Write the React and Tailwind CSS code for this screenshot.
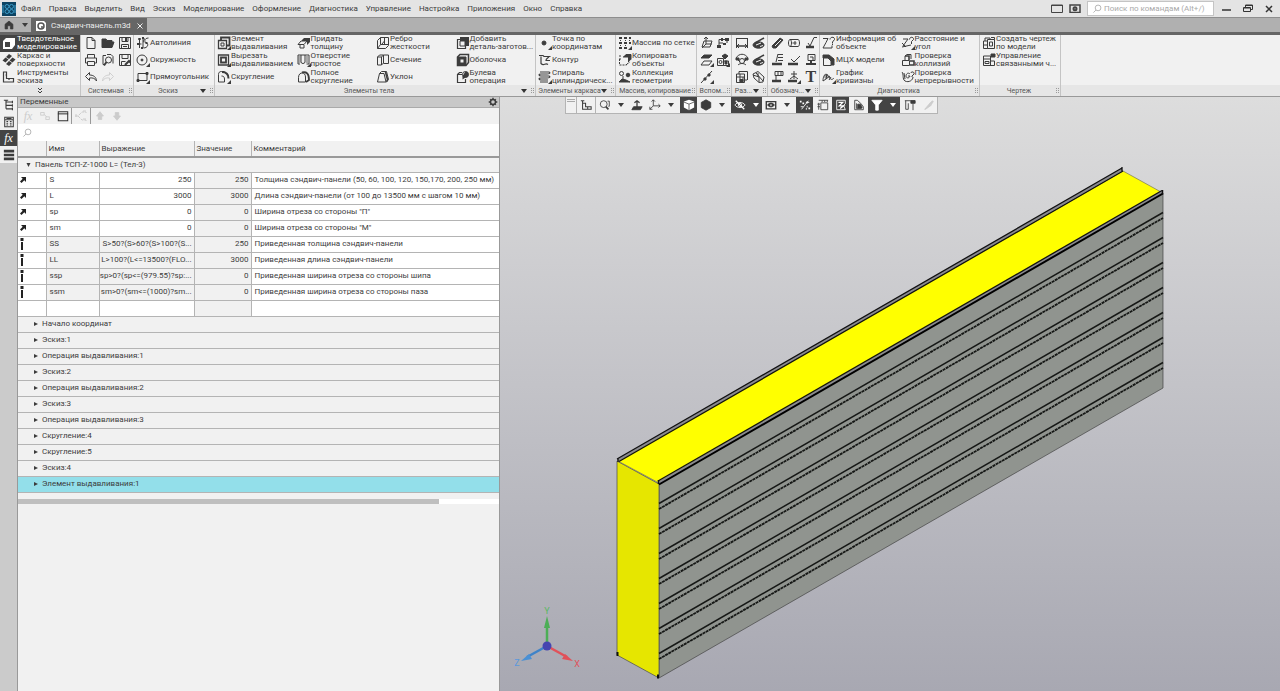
import React, { useState } from "react";

const icons = {
  solid: (
    <>
      <path d="M1 5l3-3h9v7l-3 4H1z" fill="currentColor" stroke="none" />
      <rect x="3" y="6" width="5" height="5" fill="#444" stroke="none" />
    </>
  ),
  surface: (
    <g fill="currentColor" stroke="none">
      <path d="M7 1l3 2-3 3-3-2zM3.500 4.500l3 2-3 3-3-2zM10.500 4.500l3 2-3 3-3-2zM7 8l3 2-3 3-3-2z" />
    </g>
  ),
  sketchTools: <path d="M1.500 2h3v6.500h7V12h-10zM4.500 5h-1M7 8.500v1.500" strokeWidth="1.200" />,
  newFile: <path d="M3 1.500h5l3 3v8H3zM8 1.500v3h3" />,
  open: <path d="M1 3h4l1 1.500h5V6h2l-2 5.500H1z" fill="currentColor" />,
  save: (
    <>
      <path d="M1.500 1.500h11v11h-11zM4 1.500v4h6v-4M3.500 12.500v-4h7v4M5 10.500h4" />
      <path d="M8 2v3" strokeWidth="2" />
    </>
  ),
  print: <path d="M3.500 5V1.500h7V5M3.500 10h-2V5h11v5h-2M3.500 8.500h7v4h-7z" />,
  preview: (
    <>
      <path d="M4 11.500H2v-9h3M6 1.500h4l2 2v7" />
      <circle cx="7.500" cy="7" r="3" />
      <path d="M5.500 9L3 12.500" strokeWidth="2" />
    </>
  ),
  saveAs: (
    <>
      <path d="M1.500 1.500h11v11h-11zM4 1.500v4h6v-4M3.500 12.500v-4h4" />
      <path d="M7 12l4-4 1.500 1.500" strokeWidth="2" />
    </>
  ),
  undo: <path d="M5.500 2.500L1.500 6.500l4 4V8c3.500-.5 5.500.5 7 3-.2-4-3-6-7-6z" />,
  redo: <path d="M8.500 2.500l4 4-4 4V8c-3.500-.5-5.500.5-7 3 .2-4 3-6 7-6z" />,
  autoline: (
    <>
      <path d="M2 3h3M3.500 3v9M1.500 8h4M7 2v10M12.500 2c-5 0-4 5-2 5s2 5-3 5M9 2.500c-1.500 1-2 3-1 4" />
      <path d="M2.500 2h2v2h-2zM1 7h2v2H1zM5 11h2v2H5zM9.500 6h2v2h-2zM6 1h2v2H6z" fill="currentColor" stroke="none" />
    </>
  ),
  circle: (
    <>
      <circle cx="6" cy="7" r="5" />
      <circle cx="6" cy="7" r="1" fill="currentColor" />
    </>
  ),
  rectangle: (
    <>
      <path d="M2 3.500h9v7H2z" />
      <path d="M1 9.500h2v2H1zM10 2.500h2v2h-2z" fill="currentColor" />
    </>
  ),
  extrude: (
    <>
      <path d="M4 4V1.500h8.500v8H10" strokeWidth="1.800" />
      <path d="M1.500 4.500h8v8h-8z" strokeWidth="1.300" />
      <path d="M4 7h3v3H4z" />
    </>
  ),
  cut: (
    <>
      <path d="M1.500 2h10v10h-10z" strokeWidth="1.300" />
      <path d="M4 4.500h5v5H4z" strokeWidth="1.800" />
    </>
  ),
  fillet: (
    <>
      <path d="M1.500 12V4.500c0-2 1-3 3-3h3" />
      <path d="M5 2c4.500 0 6.500 2 6.500 6.500" strokeWidth="2" />
      <path d="M1.500 12h6V9c0-2-1-3-3-3" />
    </>
  ),
  thicken: (
    <>
      <path d="M1 8.500L4 5h6L7 8.500zM3 9v3h4V9" />
      <path d="M5 4l2-2h6v4l-3 3V5H5z" fill="currentColor" stroke="none" />
    </>
  ),
  hole: (
    <>
      <path d="M1 2h11v9H9.500M1 2v9h2M4 2v7c0 2 4 2 4 0V2" />
      <path d="M2.500 3v7M10 3v7" strokeWidth="2" opacity=".4" />
    </>
  ),
  fullFillet: (
    <>
      <path d="M1.500 12V7.500c0-6 7-6 7-.500v5z" />
      <path d="M5 2.500c4.500-1 7 1 7 7.500l-3 2" strokeWidth="1.800" />
    </>
  ),
  rib: <path d="M1.500 4.500l3-3h8v8l-3 3h-8zM4.500 1.500v7h8M4.500 8.500l-3 4M8.500 2v6M6 8l2.500-3" />,
  section: <path d="M1.500 4l2-2h4v8l-2 2h-4zM7.500 2h5v8.500h-5M5.500 4H1.500M5.500 4v8M5.500 4l2-2" />,
  draft: (
    <>
      <path d="M1.500 12l2-8.500 2-2h5l2 8-2 2.500zM3.500 3.500H8l2 8.500" />
      <path d="M9.500 2l2 7.500-.8 2" strokeWidth="1.600" />
    </>
  ),
  addPart: (
    <>
      <path d="M4 3.500H1.500v9h8V10" strokeWidth="1.200" />
      <path d="M4 1h9v9H9V5H4z" fill="currentColor" stroke="none" />
      <path d="M4 5h5v5H4z" />
    </>
  ),
  shell: (
    <>
      <path d="M1.500 4L4 1.500h8.500v8L10 12.500H1.500z" strokeWidth="1.500" />
      <path d="M2 4h8v8H2z" fill="currentColor" />
      <path d="M4.500 6.500h3v3h-3z" fill="#f1f1f1" stroke="none" />
    </>
  ),
  boolean: (
    <>
      <path d="M6 4.500H1.500v8h8V9M1.500 4.500l2-2H6" strokeWidth="1.200" />
      <circle cx="9.500" cy="4.500" r="3" fill="#f1f1f1" />
      <path d="M9.500 1.500a3 3 0 010 6l-3 2V6z" fill="currentColor" stroke="none" />
    </>
  ),
  point: <circle cx="6" cy="7" r="2" fill="currentColor" />,
  contour: <path d="M1 2.500h4l1 1h6.500M3 3.500v7c3 3 4-1 7 1M11 3.500c-1 2-3 2-3 4h4" strokeWidth="1.200" />,
  spiral: (
    <path d="M2 2h9c2 1 0 2-2 2H3C0 4 1 6 3 6h8c2 1 0 2-2 2H3c-3 0-2 2 0 2h7M2 12h8" strokeWidth="1.200" />
  ),
  gridArray: (
    <g stroke="none" fill="currentColor">
      <path d="M1 1h3v2H1zM6 1h3v2H6zM11 1h2v2h-2zM1 6h3v2H1zM6 6h3v2H6zM11 6h2v2h-2zM1 11h3v2H1zM6 11h3v2H6z" />
      <path d="M2 4h1v1H2zM7 4h1v1H7zM11 4h1v1h-1zM2 9h1v1H2zM7 9h1v1H7z" />
    </g>
  ),
  copyObj: (
    <>
      <path d="M5 4l2.500-2.500H13v5L10.500 9V4z" fill="currentColor" stroke="none" />
      <path d="M5 4h5.500v5M8 1.500h5v5" />
      <path d="M1 6h3M1.500 6v6h7v-2M1 3h3M9 11l3-2" strokeDasharray="2 1" />
    </>
  ),
  collection: (
    <>
      <circle cx="3.500" cy="3.500" r="2" />
      <circle cx="10" cy="5" r="1.800" fill="currentColor" />
      <path d="M5 6v4" />
      <path d="M1 12l3-3 4 1 4 2z" fill="currentColor" />
    </>
  ),
  plane: <path d="M4 5h8l-2 6H2zM6 1v7M6 8L2 12M6 8h6M4 3l2-2 2 2" />,
  lcs: (
    <>
      <path d="M3 9V3.500h8M11 5v2M3 7h4" />
      <path d="M1 9h4v3H1zM9 2h4v3H9zM5 2h2v3H5zM7 7h3v2H7z" fill="currentColor" stroke="none" />
    </>
  ),
  offsetPlane: (
    <>
      <path d="M4 2h8l-3 3H1z" fill="currentColor" />
      <path d="M4 8h8l-3 4H1z" />
    </>
  ),
  component: (
    <>
      <path d="M1.500 5.500h6v7h-6zM7.500 8h5v4.500h-5z" />
      <path d="M6 3l3-2 3 2-3 3zM9 8h2v3H9z" fill="currentColor" />
      <circle cx="4.500" cy="9" r="1.500" />
    </>
  ),
  axis: (
    <>
      <path d="M1 13L12 1" />
      <path d="M4 8h2v2H4zM8 4h2v2H8z" fill="currentColor" />
    </>
  ),
  dimLinear: (
    <>
      <path d="M1.500 2v10M12.500 2v10M1.500 2.500h11M4 8l-2 2 2 2M10 8l2 2-2 2" />
      <path d="M2 10h10" strokeWidth="1.500" />
    </>
  ),
  dimDisc: (
    <>
      <ellipse cx="6.500" cy="9" rx="5.500" ry="3.200" fill="currentColor" />
      <path d="M3 7l9-5" strokeWidth="1.500" />
      <path d="M4 9l5-2M8 10.500l3-1" stroke="#f1f1f1" />
    </>
  ),
  dimAngle: (
    <>
      <path d="M1 5c3-5 9-5 12 0M3 12c2-2 6-2 8 0M3 7l2 2M11 7L9 9" />
      <circle cx="7" cy="8" r="2.500" />
      <path d="M1 5h3v2H1zM10 5h3v2h-3z" fill="currentColor" />
    </>
  ),
  dimGrid: (
    <>
      <path d="M1.500 4h8v8.500h-8zM4 1.500h8.500V10M1.500 7h8M5 4v8M8 7v5M4 1.500V4M12 10h-2" />
      <path d="M5 9.500h3v2H5z" fill="currentColor" />
    </>
  ),
  dimThread: <path d="M1 4l5-2.500 6 5.500-1 5-4 .5-5-4.500zM4 3l7 8M1 5l6 2v5M6 3v4" />,
  pencilMark: (
    <>
      <path d="M1 10l8-8 3 2-7 8H2z" fill="currentColor" />
      <path d="M4 10l6-6" stroke="#f1f1f1" />
    </>
  ),
  cylinderMark: <path d="M3 3.500h8c2 0 2 7 0 7H3c-2 0-2-7 0-7zM3 3.500c2 0 2 7 0 7M8 5v4M5.500 7h4" />,
  roughness: (
    <>
      <path d="M4 7l2 3 4-8.500h3" />
      <path d="M2 11h8" strokeWidth="2.500" />
    </>
  ),
  baseMark: (
    <>
      <path d="M5 9l2-8M7 1.500h5M7 4.500h5M7 7.500h5" />
      <path d="M1 11h10" strokeWidth="2.500" />
    </>
  ),
  leader: (
    <>
      <path d="M4 6l3 3 6-6" />
      <path d="M1 11h10" strokeWidth="2.500" />
    </>
  ),
  stamp: (
    <>
      <path d="M4 1.500h7v6H4zM6 4h3v3" />
      <path d="M2 11h10M7 7v4" strokeWidth="2" />
    </>
  ),
  tolerance: (
    <>
      <path d="M4 1.500h8v4H4zM7 2v3M10 2v3M5 6v4" />
      <path d="M1 11h9" strokeWidth="2.500" />
    </>
  ),
  position: (
    <>
      <path d="M7 1v8M4 4h6M3 9l4-3 4 3" />
      <path d="M1 11h9" strokeWidth="2.500" />
    </>
  ),
  info: (
    <>
      <path d="M1 2.500h5l-2 4-3 5.500h9V9.500" />
      <path d="M8 3.500c0-3 5-3 4.500 0L10.500 6v1.500" />
      <path d="M10 8.500h1" />
    </>
  ),
  mass: (
    <>
      <path d="M1 2h6l5 4v6H9V7L6 5H1z" fill="currentColor" />
      <path d="M1.500 5H6l3 3v4.500H1.500z" fill="#f1f1f1" />
    </>
  ),
  curvature: (
    <>
      <path d="M1 11c0-7 4-8 6-4s4 2 5 1M1 11l3-2 1-5M4 9l4-3M7 10l2-3" />
      <circle cx="4" cy="6" r="2" fill="currentColor" opacity=".4" />
    </>
  ),
  distance: (
    <>
      <path d="M2 3h5L2 10M1 11l9-2M1 7l4 4" />
      <path d="M8.500 3.500c0-3 4.500-3 4 0l-2 2V8" />
    </>
  ),
  collision: (
    <>
      <path d="M1.500 7.500h7v5h-7zM4 7V3l2-1.500h4V6" />
      <path d="M4 3h4v4M9 8h4v4H9" strokeWidth="1.600" />
    </>
  ),
  continuity: <path d="M1 2c2 2 0 7 3 9 4 2 8-1 8-4M3 3l1 6M9 4c-2-2-4 0-4 2s3 3 4 0H7M10 3c0-2 4-1 3 1l-2 2v1" />,
  createDrawing: <path d="M1.500 5h4v7.500h-4zM5.500 3.500h7v9h-7zM3 5V2h5v1.500M7.500 6h3v4h-3zM1.500 9h4M9 1.500h3.500v2" />,
  linked: (
    <>
      <path d="M1.500 3h7v9.500h-7zM1.500 6h7M3 8.500h4v2H3zM9 8h3.500v4.500H8" />
      <path d="M9 1h4v3H9z" fill="currentColor" />
    </>
  ),
  tree: <path d="M3.500 1v10.500M3.500 3.500h7M3.500 7.500h7M3.500 11.500h7M11 2v3M11 6v3M11 10v3M1 1.500h5" strokeWidth="1.300" />,
  params: (
    <path
      d="M2 1.500h10v11H2zM2 4.500h10M4 6.500h2M8 6.500h2M4 8.500h2M8 8.500h2M4 10.500h2M8 10.500h2M4 3h6"
      strokeWidth="1.200"
    />
  ),
  bars: <path d="M1 2.500h12M1 7h12M1 11.500h12" strokeWidth="3" />,
  link: (
    <>
      <rect x="2" y="3" width="4" height="3" />
      <rect x="8" y="8" width="4" height="3" />
      <path d="M6 5l3 3" />
    </>
  ),
  windowIcon: (
    <>
      <path d="M1.500 2h11v10.500h-11z" strokeWidth="1.200" />
      <path d="M1 4.500h12" strokeWidth="1.200" />
    </>
  ),
  branch: <path d="M1 7h3l4-4h4M4 7l4 4h4M2 5v4M9 2h3v2M9 10h3v2" strokeDasharray="3 1" />,
  up: <path d="M7 2l4 5H9v4H5V7H3z" fill="currentColor" />,
  down: <path d="M7 12l4-5H9V3H5v4H3z" fill="currentColor" />,
  magnifier: (
    <>
      <circle cx="8.500" cy="5.500" r="4" />
      <path d="M5.500 8.500L2 12" />
    </>
  ),
  gear: (
    <>
      <circle cx="7" cy="7" r="3.500" strokeWidth="2" />
      <path d="M7 1v2M7 11v2M1 7h2M11 7h2M3 3l1 1M10 10l1 1M3 11l1-1M10 4l1-1" strokeWidth="2" />
    </>
  ),
  orient: <path d="M1 2h4M3 2v10h10V9H6.500V5H3M9 9v3" strokeWidth="1.200" />,
  zoomView: (
    <>
      <circle cx="5.500" cy="6" r="4" />
      <path d="M8 9l3 3" strokeWidth="2" />
      <path d="M10 2.500h2v6h-1" />
    </>
  ),
  normalTo: (
    <>
      <path d="M3 9h10l-2 3.500H1z" fill="currentColor" />
      <path d="M7 10V2M4 4.500L7 2l3 2.500" strokeWidth="1.500" />
    </>
  ),
  axes: <path d="M5 8V1M5 8l-4 4M5 8h8M3 3l2-2 2 2M11 6l2 2-2 2M1 9v3h3" />,
  cube: (
    <>
      <path d="M7 1l6 2v7l-6 3-6-3V3z" fill="currentColor" stroke="none" />
      <path d="M1 3.500l6 2.500 6-2.500M7 6v7" stroke="#555" />
    </>
  ),
  hexagon: <path d="M7 1l5.500 3v6L7 13l-5.500-3V4z" fill="currentColor" />,
  eyeOff: (
    <>
      <path d="M1 7c3-4 9-4 12 0-3 4-9 4-12 0z" />
      <circle cx="7" cy="7" r="2" />
      <path d="M2 2l10 10" strokeWidth="1.500" />
    </>
  ),
  eyeBox: (
    <>
      <path d="M1.500 3h11v8.500h-11z" strokeWidth="1.600" />
      <path d="M3 7c2-3 6-3 8 0-2 3-6 3-8 0z" fill="currentColor" />
      <circle cx="7" cy="7" r="1" fill="#f1f1f1" stroke="none" />
    </>
  ),
  percent: (
    <>
      <path d="M3 12l8-10M8 4h4M9.500 2.500v3M2 9h3" />
      <path d="M1 3h2M4 5h2M9 9h1M11 11h2M8 11.500h1" strokeWidth="2" />
    </>
  ),
  layers: <path d="M4.500 4.500h8v8h-8zM2 4.500v8M2 1.500h11M6 1.500v2M9 1.500v2M12 1.500v2M.5 6h3M.5 9h3" />,
  sheet: (
    <>
      <path d="M2 1.500h10v4l-2 2 2 5H2z" />
      <path d="M4 4h5L5 8h5l-4 3" strokeWidth="1.500" />
    </>
  ),
  shade: (
    <>
      <path d="M2 1.500v11h10V9L9 5 5 1.500zM4 5v6h6" />
      <path d="M5.500 6h3l2 3v1.500h-5z" fill="currentColor" />
    </>
  ),
  filter: <path d="M1 1.500h12L8.500 7v6h-3V7z" fill="currentColor" />,
  caliper: (
    <>
      <path d="M1 2h12M2 2v10M5 5v7M2 12h3M10.500 5v8" />
      <path d="M8 2h5v3H8z" fill="currentColor" />
    </>
  ),
  dropper: <path d="M2 12l6-7 2 2-7 5zM8 5l3-3 1 1-2 3z" fill="currentColor" />,
  home: <path d="M7 1.500L1.500 6v6.500H5V8h4v4.500h3.500V6z" fill="currentColor" />,
};

const Icon = ({ name, corner = false, className = "w-3.5 h-3.5" }) => (
  <svg
    viewBox="0 0 14 14"
    className={`shrink-0 ${className}`}
    fill="none"
    stroke="currentColor"
    strokeWidth="1"
    aria-hidden="true"
  >
    {icons[name]}
    {corner && <path d="M14 10v4h-4z" fill="currentColor" stroke="none" />}
  </svg>
);

const Arrow = () => (
  <svg viewBox="0 0 6 4" className="w-1.5 h-1 shrink-0" fill="currentColor" aria-hidden="true">
    <path d="M0 0h6L3 4z" />
  </svg>
);

const Grip = () => (
  <svg viewBox="0 0 3 6" className="w-[3px] h-1.5 shrink-0" fill="none" stroke="#999" aria-hidden="true">
    <path d="M.5 0v6M2.500 0v6" strokeDasharray="1 1" />
  </svg>
);

const menu = [
  "Файл",
  "Правка",
  "Выделить",
  "Вид",
  "Эскиз",
  "Моделирование",
  "Оформление",
  "Диагностика",
  "Управление",
  "Настройка",
  "Приложения",
  "Окно",
  "Справка",
];

const modes = [
  { icon: "solid", lines: ["Твердотельное", "моделирование"] },
  { icon: "surface", lines: ["Каркас и", "поверхности"] },
  { icon: "sketchTools", lines: ["Инструменты", "эскиза"] },
];

const groups = [
  {
    title: "Системная",
    width: "w-[53px]",
    columns: "grid-cols-3",
    tools: [
      ["newFile"],
      ["print"],
      ["undo"],
      ["open"],
      ["preview"],
      ["redo", null, false, true],
      ["save"],
      ["saveAs"],
    ],
  },
  {
    title: "Эскиз",
    width: "w-[81px]",
    columns: "grid-cols-1",
    menu: true,
    tools: [
      ["autoline", ["Автолиния"]],
      ["circle", ["Окружность"], true],
      ["rectangle", ["Прямоугольник"], true],
    ],
  },
  {
    title: "Элементы тела",
    width: "w-[321px]",
    columns: "grid-cols-4",
    menu: true,
    tools: [
      ["extrude", ["Элемент", "выдавливания"], true],
      ["cut", ["Вырезать", "выдавливанием"], true],
      ["fillet", ["Скругление"], true],
      ["thicken", ["Придать", "толщину"]],
      ["hole", ["Отверстие", "простое"], true],
      ["fullFillet", ["Полное", "скругление"]],
      ["rib", ["Ребро", "жесткости"]],
      ["section", ["Сечение"]],
      ["draft", ["Уклон"]],
      ["addPart", ["Добавить", "деталь-заготов..."]],
      ["shell", ["Оболочка"]],
      ["boolean", ["Булева", "операция"]],
    ],
  },
  {
    title: "Элементы каркаса",
    width: "w-[80px]",
    columns: "grid-cols-1",
    menu: true,
    tools: [
      ["point", ["Точка по", "координатам"], true],
      ["contour", ["Контур"]],
      ["spiral", ["Спираль", "цилиндрическ..."], true],
    ],
  },
  {
    title: "Массив, копирование",
    width: "w-[81px]",
    columns: "grid-cols-1",
    tools: [
      ["gridArray", ["Массив по сетке"], true],
      ["copyObj", ["Копировать", "объекты"]],
      ["collection", ["Коллекция", "геометрии"]],
    ],
  },
  {
    title: "Вспом...",
    width: "w-[35px]",
    columns: "grid-cols-2",
    tools: [["plane"], ["offsetPlane", null, true], ["axis", null, true], ["lcs"], ["component", null, true]],
  },
  {
    title: "Раз...",
    width: "w-[36px]",
    columns: "grid-cols-2",
    menu: true,
    tools: [["dimLinear"], ["dimAngle"], ["dimGrid"], ["dimDisc"], ["dimDisc"], ["dimThread"]],
  },
  {
    title: "Обознач...",
    width: "w-[52px]",
    columns: "grid-cols-3",
    menu: true,
    tools: [
      ["pencilMark"],
      ["baseMark"],
      ["tolerance"],
      ["cylinderMark"],
      ["leader"],
      ["position", null, true],
      ["roughness"],
      ["stamp"],
      ["text"],
    ],
  },
  {
    title: "Диагностика",
    width: "w-[160px]",
    columns: "grid-cols-2",
    tools: [
      ["info", ["Информация об", "объекте"]],
      ["mass", ["МЦХ модели"]],
      ["curvature", ["График", "кривизны"], true],
      ["distance", ["Расстояние и", "угол"], true],
      ["collision", ["Проверка", "коллизий"]],
      ["continuity", ["Проверка", "непрерывности"]],
    ],
  },
  {
    title: "Чертеж",
    width: "w-[81px]",
    columns: "grid-cols-1",
    tools: [
      ["createDrawing", ["Создать чертеж", "по модели"]],
      ["linked", ["Управление", "связанными ч..."]],
    ],
  },
];

const variables = [
  { name: "S", expr: "250", value: "250", comment: "Толщина сэндвич-панели (50, 60, 100, 120, 150,170, 200, 250 мм)" },
  { name: "L", expr: "3000", value: "3000", comment: "Длина сэндвич-панели (от 100 до 13500 мм с шагом 10 мм)" },
  { name: "sp", expr: "0", value: "0", comment: 'Ширина отреза со стороны "П"' },
  { name: "sm", expr: "0", value: "0", comment: 'Ширина отреза со стороны "М"' },
  { name: "SS", expr: "S>50?(S>60?(S>100?(S...", value: "250", comment: "Приведенная толщина сэндвич-панели", info: true },
  { name: "LL", expr: "L>100?(L<=13500?(FLO...", value: "3000", comment: "Приведенная длина сэндвич-панели", info: true },
  { name: "ssp", expr: "sp>0?(sp<=(979.55)?sp:...", value: "0", comment: "Приведенная ширина отреза со стороны шипа", info: true },
  { name: "ssm", expr: "sm>0?(sm<=(1000)?sm...", value: "0", comment: "Приведенная ширина отреза со стороны паза", info: true },
];

const operations = [
  "Начало координат",
  "Эскиз:1",
  "Операция выдавливания:1",
  "Эскиз:2",
  "Операция выдавливания:2",
  "Эскиз:3",
  "Операция выдавливания:3",
  "Скругление:4",
  "Скругление:5",
  "Эскиз:4",
  "Элемент выдавливания:1",
];

const TitleBar = () => (
  <header className="flex items-center h-[17px] bg-[#e4e4e4] pl-0.5 pr-[7px]">
    <svg viewBox="0 0 14 14" className="w-3.5 h-3.5 shrink-0" aria-hidden="true">
      <rect width="14" height="14" fill="#0d4463" />
      <g fill="none" stroke="#3d9cc8">
        <circle cx="5" cy="4.500" r="2" />
        <circle cx="9.500" cy="4.500" r="2" />
        <circle cx="5" cy="9.500" r="2" />
        <circle cx="9.500" cy="9.500" r="2" />
        <path d="M1 3v8M13 3v8" />
      </g>
    </svg>
    <nav className="flex gap-2 ml-[5px] flex-1">
      {menu.map((item) => (
        <button key={item} type="button" className="whitespace-nowrap">
          {item}
        </button>
      ))}
    </nav>
    <div className="flex items-center gap-1.5">
      <button type="button" aria-label="Окно">
        <svg viewBox="0 0 12 9" className="w-3 h-[9px] block" fill="none" stroke="#444">
          <path d="M.5 1h11v7.500H.5zM0 1.500h12" />
        </svg>
      </button>
      <button type="button" aria-label="Вид экрана">
        <svg viewBox="0 0 12 9" className="w-3 h-[9px] block" fill="none" stroke="#444">
          <path d="M1 1h10v7.500H1z" strokeWidth="1.500" />
          <circle cx="6" cy="4.800" r="1.500" strokeWidth="2" />
        </svg>
      </button>
      <label className="flex items-center w-[127px] h-[15px] bg-white border border-[#c4c4c4] pl-1 text-[#999]">
        <Icon name="magnifier" className="w-2.5 h-2.5" />
        <input
          aria-label="Поиск по командам"
          placeholder="Поиск по командам (Alt+/)"
          className="w-full pl-0.5 outline-none placeholder:text-[#aaa]"
        />
      </label>
    </div>
    <div className="flex items-center gap-3 ml-2 text-[#333]">
      <button type="button" aria-label="Свернуть">
        <svg viewBox="0 0 9 9" className="w-[9px] h-[9px] block" stroke="currentColor" strokeWidth="1.500">
          <path d="M0 6h9" />
        </svg>
      </button>
      <button type="button" aria-label="Развернуть">
        <svg viewBox="0 0 10 9" className="w-2.5 h-[9px] block" fill="none" stroke="currentColor">
          <path d="M.5 3.500h7v4h-7zM2.500 3V1h7v4.500h-2M1 4h6M3 1.500h6" />
        </svg>
      </button>
      <button type="button" aria-label="Закрыть">
        <svg viewBox="0 0 8 8" className="w-2 h-2 block" stroke="currentColor" strokeWidth="1.500">
          <path d="M1 1l6 6M7 1L1 7" />
        </svg>
      </button>
    </div>
  </header>
);

const TabBar = () => (
  <div className="flex h-[18px] bg-[#b0b0b0] border-t border-[#8e8e8e] border-b-[3px] border-b-[#666]">
    <button type="button" aria-label="Главная" className="flex items-center gap-2 pl-1 w-[31px]">
      <Icon name="home" className="w-2.5 h-2.5" />
      <Arrow />
    </button>
    <div className="flex items-center gap-1 h-[15px] px-1 bg-[#666] text-[#eee]">
      <svg viewBox="0 0 12 12" className="w-3 h-3" aria-hidden="true">
        <path d="M1 1h8l2 2v8H1z" fill="#fff" />
        <circle cx="6" cy="6" r="3" fill="none" stroke="#555" strokeWidth="1.500" />
        <circle cx="7" cy="7" r="1" fill="#555" />
      </svg>
      <span className="pr-0.5">Сэндвич-панель.m3d</span>
      <button type="button" aria-label="Закрыть вкладку">
        <svg viewBox="0 0 6 6" className="w-1.5 h-1.5 block" stroke="currentColor">
          <path d="M.5.500l5 5M5.500.500l-5 5" />
        </svg>
      </button>
    </div>
  </div>
);

const Label = ({ lines }) => (
  <span className="leading-[8px] whitespace-nowrap">
    {lines.map((line) => (
      <span key={line} className="block">
        {line}
      </span>
    ))}
  </span>
);

const Tool = ({ icon, lines, corner, disabled }) => (
  <button
    type="button"
    aria-label={lines ? undefined : icon}
    disabled={disabled}
    className={`flex items-center min-w-0 text-left ${lines ? "" : "justify-center"} ${
      disabled ? "text-[#d0d0d0]" : ""
    }`}
  >
    {icon === "text" ? (
      <span className="font-['Liberation_Serif',serif] font-bold text-base leading-none">T</span>
    ) : (
      <Icon name={icon} corner={corner} />
    )}
    {lines && <Label lines={lines} />}
  </button>
);

const Ribbon = () => {
  const [mode, setMode] = useState(0);

  return (
    <div className="flex h-[62px] bg-[#f1f1f1] border-b border-[#999] overflow-hidden">
      <div className="flex flex-col w-[80px] shrink-0">
        <div className="grid grid-rows-3 h-[50px]">
          {modes.map((item, index) => (
            <button
              key={item.icon}
              type="button"
              onClick={() => setMode(index)}
              className={`flex items-center gap-px pl-0.5 text-left ${
                mode === index ? "bg-[#444] text-white" : ""
              }`}
            >
              <Icon name={item.icon} />
              <Label lines={item.lines} />
            </button>
          ))}
        </div>
        <button
          type="button"
          aria-label="Ещё"
          className="flex items-center justify-center h-[11px] bg-[#e6e6e6]"
        >
          <svg viewBox="0 0 6 6" className="w-1.5 h-1.5" fill="none" stroke="currentColor">
            <path d="M1 0l2 2 2-2M1 3l2 2 2-2" />
          </svg>
        </button>
      </div>

      {groups.map((group) => (
        <section key={group.title} className={`flex flex-col shrink-0 border-l border-[#c4c4c4] ${group.width}`}>
          <div className={`grid grid-flow-col grid-rows-3 h-[50px] pl-0.5 ${group.columns}`}>
            {group.tools.map(([icon, lines, corner, disabled], index) => (
              <Tool key={index} icon={icon} lines={lines} corner={corner} disabled={disabled} />
            ))}
          </div>
          <div className="flex items-center h-[11px] bg-[#e6e6e6] pl-0.5 pr-px text-[7px] text-[#555]">
            <span className="flex-1 text-center whitespace-nowrap">{group.title}</span>
            {group.menu && (
              <button type="button" aria-label={`Меню ${group.title}`} className="mr-1 text-[#333]">
                <Arrow />
              </button>
            )}
            <Grip />
          </div>
        </section>
      ))}

      <div className="flex flex-col justify-end flex-1 border-l border-[#c4c4c4]">
        <div className="h-[11px] bg-[#e6e6e6]" />
      </div>
    </div>
  );
};

const SideTabs = () => (
  <aside className="w-[17px] shrink-0 bg-[#cbcbcb]">
    <div className="flex flex-col bg-[#f1f1f1]">
      <button type="button" aria-label="Дерево" className="flex items-center justify-center h-4">
        <Icon name="tree" className="w-3 h-3" />
      </button>
      <button type="button" aria-label="Параметры" className="flex items-center justify-center h-[17px]">
        <Icon name="params" className="w-3 h-3" />
      </button>
      <button
        type="button"
        aria-label="Переменные"
        className="flex items-center justify-center h-4 bg-[#444] text-white font-['Liberation_Serif',serif] italic text-xs leading-none"
      >
        fx
      </button>
      <button type="button" aria-label="Список" className="flex items-center justify-center h-[17px]">
        <Icon name="bars" className="w-3 h-3" />
      </button>
    </div>
  </aside>
);

const VariablesPanel = () => {
  const [selected, setSelected] = useState(10);

  return (
    <section className="flex flex-col w-[483px] shrink-0 border-l border-r border-[#999] bg-[#f1f1f1]">
      <div className="flex items-center justify-between h-[11px] bg-[#c8c8c8] border-b border-[#aaa] pl-0.5 pr-px">
        <h2>Переменные</h2>
        <button type="button" aria-label="Настройки">
          <Icon name="gear" className="w-2.5 h-2.5" />
        </button>
      </div>

      <div className="flex items-center h-4 pl-0.5 text-[#ccc]">
        <button
          type="button"
          aria-label="Функция"
          className="w-4 font-['Liberation_Serif',serif] italic text-xs leading-none"
        >
          fx
        </button>
        <button type="button" aria-label="Ссылка" className="flex justify-center w-[18px]">
          <Icon name="link" className="w-3 h-3" />
        </button>
        <button type="button" aria-label="Таблица" className="flex justify-center w-[17px] text-[#333]">
          <Icon name="windowIcon" className="w-3 h-3" />
        </button>
        <button
          type="button"
          aria-label="Связи"
          className="flex items-center justify-center w-5 h-full border-x border-[#999]"
        >
          <Icon name="branch" />
        </button>
        <button type="button" aria-label="Вверх" className="flex justify-center w-[18px]">
          <Icon name="up" className="w-3 h-3" />
        </button>
        <button type="button" aria-label="Вниз" className="flex justify-center w-4">
          <Icon name="down" className="w-3 h-3" />
        </button>
      </div>

      <label className="flex items-center h-[17px] pl-1 bg-white text-[#999]">
        <Icon name="magnifier" className="w-2.5 h-2.5" />
        <input aria-label="Поиск переменных" className="flex-1 outline-none" />
      </label>

      <table className="w-full table-fixed border-collapse leading-[10px]">
        <colgroup>
          <col className="w-[28px]" />
          <col className="w-[53px]" />
          <col className="w-[95px]" />
          <col className="w-[57px]" />
          <col />
        </colgroup>
        <thead>
          <tr className="h-4 text-left border-b-2 border-[#999]">
            <th aria-label="Тип" />
            <th className="font-normal px-0.5 border-l border-[#b4b4b4]">Имя</th>
            <th className="font-normal px-0.5 border-l border-[#b4b4b4]">Выражение</th>
            <th className="font-normal px-0.5 border-l border-[#b4b4b4]">Значение</th>
            <th className="font-normal px-0.5 border-l border-[#b4b4b4]">Комментарий</th>
          </tr>
        </thead>
        <tbody>
          <tr className="h-[15px] border-b border-[#b4b4b4]">
            <td colSpan={5} className="pl-2">
              <span className="flex items-center gap-1">
                <svg viewBox="0 0 5 4" className="w-[5px] h-1" fill="currentColor">
                  <path d="M.5 0h4L2.500 4z" />
                </svg>
                Панель ТСП-Z-1000 L= (Тел-3)
              </span>
            </td>
          </tr>
          {variables.map((row) => (
            <tr key={row.name} className="h-4 bg-white border-b border-[#b4b4b4]">
              <td className="pl-0.5">
                {row.info ? (
                  <svg viewBox="0 0 4 12" className="w-1 h-3 block" fill="#222">
                    <path d="M.5 0h3v3h-3zM1 4h2v8H1z" />
                  </svg>
                ) : (
                  <svg viewBox="0 0 6 6" className="w-1.5 h-1.5 block" fill="#222">
                    <path d="M1 0h5v5L4.300 3.300 1.500 6 0 4.500l2.700-2.800z" />
                  </svg>
                )}
              </td>
              <td className={`pl-[3px] border-l border-[#b4b4b4] ${row.info ? "bg-[#f1f1f1]" : ""}`}>{row.name}</td>
              <td
                className={`pr-0.5 text-right whitespace-nowrap border-l border-[#b4b4b4] ${
                  row.info ? "bg-[#f1f1f1]" : ""
                }`}
              >
                {row.expr}
              </td>
              <td className="pr-0.5 text-right border-l border-[#b4b4b4] bg-[#f1f1f1]">{row.value}</td>
              <td className="pl-[3px] whitespace-nowrap border-l border-[#b4b4b4]">{row.comment}</td>
            </tr>
          ))}
          <tr className="h-4 bg-white border-b border-[#b4b4b4]">
            <td />
            <td className="border-l border-[#b4b4b4]" />
            <td className="border-l border-[#b4b4b4]" />
            <td className="border-l border-[#b4b4b4] bg-[#f1f1f1]" />
            <td className="border-l border-[#b4b4b4]" />
          </tr>
          {operations.map((name, index) => (
            <tr
              key={name}
              onClick={() => setSelected(index)}
              className={`h-4 border-b border-[#b4b4b4] ${selected === index ? "bg-[#93dfea]" : ""}`}
            >
              <td colSpan={5} className="pl-4">
                <span className="flex items-center gap-1">
                  <svg viewBox="0 0 4 4" className="w-1 h-1" fill="currentColor">
                    <path d="M0 0l4 2-4 2z" />
                  </svg>
                  {name}
                </span>
              </td>
            </tr>
          ))}
        </tbody>
      </table>

      <div className="h-[5px] mt-1.5 bg-white">
        <div className="h-full w-[421px] bg-[#bfbfbf]" />
      </div>
    </section>
  );
};

const viewTools = [
  { icon: "orient", width: "w-[19px]", divider: true },
  { icon: "zoomView", width: "w-[31px]", menu: true },
  { icon: "normalTo", width: "w-[19px]" },
  { icon: "axes", width: "w-[34px]", menu: true },
  { icon: "cube", width: "w-[17px]", active: true },
  { icon: "hexagon", width: "w-[34px]", menu: true },
  { icon: "eyeOff", width: "w-[31px]", menu: true, active: true },
  { icon: "eyeBox", width: "w-[34px]", menu: true },
  { icon: "percent", width: "w-[17px]", active: true },
  { icon: "layers", width: "w-[19px]" },
  { icon: "sheet", width: "w-[17px]", active: true },
  { icon: "shade", width: "w-[19px]" },
  { icon: "filter", width: "w-[32px]", menu: true, active: true },
  { icon: "caliper", width: "w-[20px]" },
  { icon: "dropper", width: "w-[17px]", disabled: true },
];

const ViewToolbar = () => (
  <div className="absolute top-0 left-[65px] flex h-[17px] bg-[#f1f1f1] border border-t-0 border-[#b4b4b4]">
    <div className="w-[11px] pt-0.5 px-px border-r border-[#b4b4b4]">
      <div className="h-[3px] border-y border-[#aaa]" />
    </div>
    {viewTools.map((tool) => (
      <button
        key={tool.icon}
        type="button"
        aria-label={tool.icon}
        disabled={tool.disabled}
        className={`flex items-center h-full ${tool.width} ${
          tool.menu ? "gap-[7px] pl-[3px]" : "justify-center"
        } ${tool.active ? "bg-[#444] text-white" : ""} ${tool.disabled ? "text-[#ccc]" : ""} ${
          tool.divider ? "border-r border-[#b4b4b4]" : ""
        }`}
      >
        <Icon name={tool.icon} className="w-3 h-3" />
        {tool.menu && <Arrow />}
      </button>
    ))}
  </div>
);

const grooves = [0, 25, 50, 75, 100, 125, 150];

const Viewport = () => (
  <main className="relative flex-1 min-w-0 bg-linear-to-b from-[#dddddd] to-[#a8a8b2]">
    <svg viewBox="500 97 780 594" className="block w-full h-full" role="img" aria-label="Сэндвич-панель">
      {/* panel body */}
      <path d="M659 484L1163 193V388L659 678z" fill="#90948f" stroke="#444" strokeWidth=".7" />
      <path d="M617 461L659 484V678L617 655z" fill="#e6e600" stroke="#555" strokeWidth=".8" />
      <path d="M618 461L1123 171L1161 192L659 483z" fill="#ffff00" stroke="#775" strokeWidth=".7" />

      {/* edge rails */}
      <path d="M617 459L1122 168V171L619 461z" fill="#8a8a90" />
      <path d="M617 459L1122 168M619 461.500L1123 171M618 458v4M1122 167v4" stroke="#111" strokeWidth="1.300" />
      <path d="M658 481.500L1162 190.500L1163 194L659 484z" fill="#8a8a90" />
      <path d="M658 481L1162 190.500" stroke="#111" strokeWidth="1.300" />
      <path d="M659 484.500L1163 193.500" stroke="#000" strokeWidth="2" />
      <path d="M658.500 480v4M1162.500 190v4" stroke="#111" strokeWidth="1.500" />

      {/* profile grooves */}
      <g stroke="#161816">
        {grooves.map((y) => (
          <g key={y}>
            <line x1="659" y1={503.5 + y} x2="1163" y2={212.5 + y} strokeWidth="1.500" />
            <line x1="659" y1={509 + y} x2="1163" y2={218 + y} strokeWidth="1.800" strokeDasharray="3 .6" />
          </g>
        ))}
      </g>
      <path d="M616.500 652h2v4h-2zM657 674.500h2v4h-2z" fill="#111" />

      {/* coordinate axes */}
      <g strokeWidth="2.500">
        <path d="M547 646V624" stroke="#4cae56" />
        <path d="M547 646L567 657" stroke="#e0525a" />
        <path d="M547 646L527 657" stroke="#3f83c8" />
      </g>
      <path d="M547 616l3 12h-6z" fill="#4cae56" />
      <path d="M573 661l-11-2 3-5z" fill="#e0525a" />
      <path d="M521 661l11-2-3-5z" fill="#4a90d4" />
      <circle cx="547" cy="646" r="4.500" fill="#4545b0" />
      <g className="text-[9px]" textAnchor="middle">
        <text x="547" y="614" fill="#5cb866">Y</text>
        <text x="577" y="667" fill="#e0525a">X</text>
        <text x="517" y="666" fill="#5a98dc">Z</text>
      </g>
    </svg>
    <ViewToolbar />
  </main>
);

const App = () => {
  return (
    <div className="flex flex-col h-screen overflow-hidden font-['Roboto',sans-serif] text-[8px] leading-[10px] text-[#3c3c3c]">
      <TitleBar />
      <TabBar />
      <Ribbon />
      <div className="flex flex-1 min-h-0">
        <SideTabs />
        <VariablesPanel />
        <Viewport />
      </div>
    </div>
  );
};

export default App;
